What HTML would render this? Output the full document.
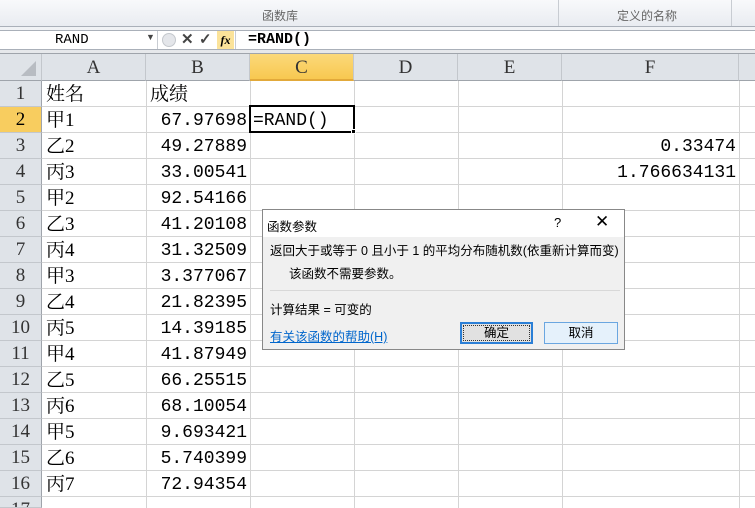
<!DOCTYPE html><html><head><meta charset="utf-8"><style>
*{margin:0;padding:0;box-sizing:border-box}
html,body{width:755px;height:508px;overflow:hidden}
body{background:#fff;position:relative;font-family:"Liberation Serif","Noto Serif CJK SC",serif}
.a{position:absolute}
.rib{left:0;top:0;width:755px;height:27px;background:linear-gradient(#f8f9fb,#e9ecf1);border-bottom:1px solid #aab0b9;font:12px "Liberation Sans","Noto Sans CJK SC",sans-serif;color:#666}
.cell{position:absolute;font-size:19px;line-height:26px;color:#000;white-space:nowrap}
.num{font-family:"Liberation Mono","Noto Serif CJK SC",monospace;font-size:18px;text-align:right}
.hdr{position:absolute;top:54px;height:27px;background:#dfe3e8;border-right:1px solid #c3c7cc;border-bottom:1px solid #9fa4ab;text-align:center;font-size:19px;line-height:27px;color:#333}
.rh{position:absolute;left:0;width:42px;height:26px;background:#dfe3e8;border-bottom:1px solid #c3c7cc;border-right:1px solid #9fa4ab;text-align:center;font-size:19px;line-height:26px;color:#333}
.dlg{left:262px;top:209px;width:363px;height:141px;background:#f0f0f0;border:1px solid #888;font:12.5px "Liberation Sans","Noto Sans CJK SC",sans-serif;color:#000}
</style></head><body>
<div class="a rib"><span class="a" style="left:262px;top:7px">函数库</span><div class="a" style="left:558px;top:0;height:26px;border-left:1px solid #c8ccd2"></div><span class="a" style="left:617px;top:7px">定义的名称</span><div class="a" style="left:731px;top:0;height:26px;border-left:1px solid #c8ccd2"></div></div>
<div class="a" style="left:0;top:27px;width:755px;height:27px;background:#f0f2f5"></div>
<div class="a" style="left:0;top:30px;width:755px;height:20px;background:#fff;border-top:1px solid #aab0b9;border-bottom:1px solid #aab0b9"></div>
<div class="a" style="left:0;top:50px;width:755px;height:4px;background:#e6e8eb;border-bottom:1px solid #9fa4ab"></div>
<div class="a" style="left:55px;top:32px;font:14px 'Liberation Mono',monospace">RAND</div>
<div class="a" style="left:146px;top:32px;font-size:9px;color:#444">▼</div>
<div class="a" style="left:157px;top:31px;width:1px;height:18px;background:#c8ccd2"></div>
<div class="a" style="left:162px;top:33px;width:14px;height:14px;border-radius:50%;background:#e4e6ea;border:1px solid #c4c8cd"></div>
<div class="a" style="left:181px;top:30px;font:bold 15px 'Liberation Sans',sans-serif;color:#444">✕</div>
<div class="a" style="left:199px;top:30px;font:bold 15px 'Liberation Sans',sans-serif;color:#444">✓</div>
<div class="a" style="left:217px;top:31px;width:17px;height:18px;background:#fbe39a;font:italic bold 12px 'Liberation Serif',serif;text-align:center;line-height:18px">fx</div>
<div class="a" style="left:235px;top:31px;width:1px;height:18px;background:#c8ccd2"></div>
<div class="a" style="left:248px;top:31px;font:bold 15px 'Liberation Mono',monospace">=RAND()</div>
<div class="hdr" style="left:0;width:42px"><svg width="42" height="27"><polygon points="36,7 36,22 21,22" fill="#b8bcc2"/></svg></div>
<div class="hdr" style="left:42px;width:104px">A</div><div class="hdr" style="left:146px;width:104px">B</div>
<div class="hdr" style="left:250px;width:104px;background:linear-gradient(#fbd97a,#f8c850);border-bottom:2px solid #e2a93a">C</div>
<div class="hdr" style="left:354px;width:104px">D</div><div class="hdr" style="left:458px;width:104px">E</div><div class="hdr" style="left:562px;width:177px">F</div><div class="hdr" style="left:739px;width:20px"></div>
<svg class="a" style="left:42px;top:81px" width="713" height="427">
<g stroke="#d4d4d4" stroke-width="1">
<line x1="104.5" y1="0" x2="104.5" y2="427"/><line x1="208.5" y1="0" x2="208.5" y2="427"/><line x1="312.5" y1="0" x2="312.5" y2="427"/><line x1="416.5" y1="0" x2="416.5" y2="427"/><line x1="520.5" y1="0" x2="520.5" y2="427"/><line x1="697.5" y1="0" x2="697.5" y2="427"/>
<line x1="0" y1="25.5" x2="713" y2="25.5"/><line x1="0" y1="51.5" x2="713" y2="51.5"/><line x1="0" y1="77.5" x2="713" y2="77.5"/><line x1="0" y1="103.5" x2="713" y2="103.5"/><line x1="0" y1="129.5" x2="713" y2="129.5"/><line x1="0" y1="155.5" x2="713" y2="155.5"/><line x1="0" y1="181.5" x2="713" y2="181.5"/><line x1="0" y1="207.5" x2="713" y2="207.5"/><line x1="0" y1="233.5" x2="713" y2="233.5"/><line x1="0" y1="259.5" x2="713" y2="259.5"/><line x1="0" y1="285.5" x2="713" y2="285.5"/><line x1="0" y1="311.5" x2="713" y2="311.5"/><line x1="0" y1="337.5" x2="713" y2="337.5"/><line x1="0" y1="363.5" x2="713" y2="363.5"/><line x1="0" y1="389.5" x2="713" y2="389.5"/><line x1="0" y1="415.5" x2="713" y2="415.5"/>
</g></svg>
<div class="a" style="left:249px;top:105px;width:106px;height:28px;border:2px solid #000"></div>
<div class="a" style="left:351px;top:129px;width:5px;height:5px;background:#000;border:1px solid #fff"></div>
<div class="rh" style="top:81px">1</div><div class="rh" style="top:107px;background:#f8cd5f;color:#000">2</div><div class="rh" style="top:133px">3</div><div class="rh" style="top:159px">4</div><div class="rh" style="top:185px">5</div><div class="rh" style="top:211px">6</div><div class="rh" style="top:237px">7</div><div class="rh" style="top:263px">8</div><div class="rh" style="top:289px">9</div><div class="rh" style="top:315px">10</div><div class="rh" style="top:341px">11</div><div class="rh" style="top:367px">12</div><div class="rh" style="top:393px">13</div><div class="rh" style="top:419px">14</div><div class="rh" style="top:445px">15</div><div class="rh" style="top:471px">16</div><div class="rh" style="top:497px;height:11px;overflow:hidden">17</div>
<div class="cell" style="left:46px;top:82px">姓名</div><div class="cell" style="left:150px;top:82px">成绩</div>
<div class="cell" style="left:46px;top:108px">甲1</div><div class="cell" style="left:46px;top:134px">乙2</div><div class="cell" style="left:46px;top:160px">丙3</div><div class="cell" style="left:46px;top:186px">甲2</div><div class="cell" style="left:46px;top:212px">乙3</div><div class="cell" style="left:46px;top:238px">丙4</div><div class="cell" style="left:46px;top:264px">甲3</div><div class="cell" style="left:46px;top:290px">乙4</div><div class="cell" style="left:46px;top:316px">丙5</div><div class="cell" style="left:46px;top:342px">甲4</div><div class="cell" style="left:46px;top:368px">乙5</div><div class="cell" style="left:46px;top:394px">丙6</div><div class="cell" style="left:46px;top:420px">甲5</div><div class="cell" style="left:46px;top:446px">乙6</div><div class="cell" style="left:46px;top:472px">丙7</div>
<div class="cell num" style="left:146px;width:101px;top:108px">67.97698</div><div class="cell num" style="left:146px;width:101px;top:134px">49.27889</div><div class="cell num" style="left:146px;width:101px;top:160px">33.00541</div><div class="cell num" style="left:146px;width:101px;top:186px">92.54166</div><div class="cell num" style="left:146px;width:101px;top:212px">41.20108</div><div class="cell num" style="left:146px;width:101px;top:238px">31.32509</div><div class="cell num" style="left:146px;width:101px;top:264px">3.377067</div><div class="cell num" style="left:146px;width:101px;top:290px">21.82395</div><div class="cell num" style="left:146px;width:101px;top:316px">14.39185</div><div class="cell num" style="left:146px;width:101px;top:342px">41.87949</div><div class="cell num" style="left:146px;width:101px;top:368px">66.25515</div><div class="cell num" style="left:146px;width:101px;top:394px">68.10054</div><div class="cell num" style="left:146px;width:101px;top:420px">9.693421</div><div class="cell num" style="left:146px;width:101px;top:446px">5.740399</div><div class="cell num" style="left:146px;width:101px;top:472px">72.94354</div>
<div class="cell" style="left:253px;top:108px;font-family:'Liberation Mono',monospace;font-size:18px">=RAND()</div>
<div class="cell num" style="left:562px;width:174px;top:134px">0.33474</div><div class="cell num" style="left:562px;width:174px;top:160px">1.766634131</div>
<div class="a dlg">
<div class="a" style="left:0;top:0;width:361px;height:27px;background:#fff"></div>
<div class="a" style="left:4px;top:6px">函数参数</div>
<div class="a" style="left:291px;top:5px;font-size:13px">?</div>
<div class="a" style="left:332px;top:2px;font-size:17px;font-weight:300">✕</div>
<div class="a" style="left:7px;top:30px;white-space:nowrap">返回大于或等于 0 且小于 1 的平均分布随机数(依重新计算而变)</div>
<div class="a" style="left:26px;top:53px">该函数不需要参数。</div>
<div class="a" style="left:7px;top:80px;width:350px;height:1px;background:#d8d8d8"></div>
<div class="a" style="left:7px;top:89px">计算结果 = 可变的</div>
<div class="a" style="left:7px;top:116px;color:#0066cc;text-decoration:underline">有关该函数的帮助(H)</div>
<div class="a" style="left:197px;top:112px;width:73px;height:22px;border:2px solid #2b7fd6;background:#e1e1e1;text-align:center;line-height:18px"><div style="margin:1px;border:1px dotted #333;line-height:14px">确定</div></div>
<div class="a" style="left:281px;top:112px;width:74px;height:22px;border:1px solid #6aa6e0;background:#e5f1fb;text-align:center;line-height:20px">取消</div>
</div>
</body></html>
